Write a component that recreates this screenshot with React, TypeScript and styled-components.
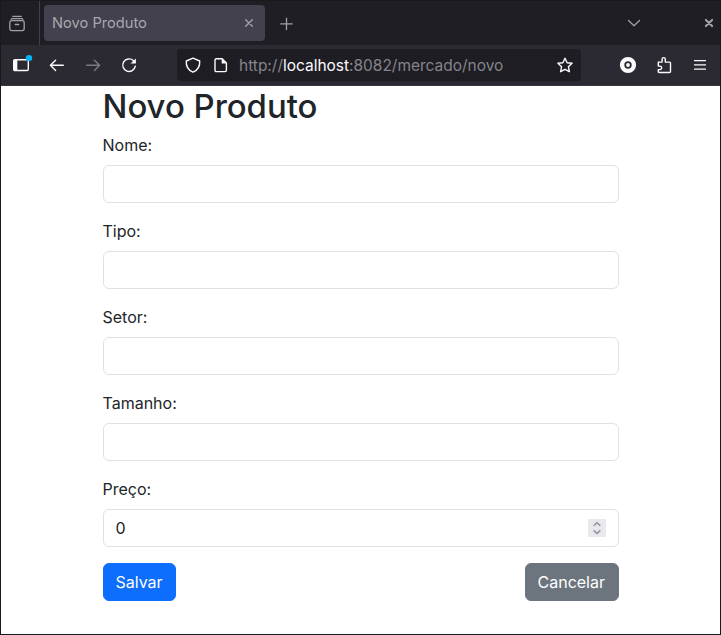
import React from "react";
import styled, { createGlobalStyle } from "styled-components";

const GlobalStyle = createGlobalStyle`
  *, *::before, *::after { box-sizing: border-box; }
  html, body { margin: 0; padding: 0; height: 100%; overflow: hidden; }
  body { font-family: Inter, "Liberation Sans", sans-serif; background: #fff; }
`;

const Window = styled.div`
  width: 721px;
  height: 635px;
  border: 1px solid #19191c;
  background: #fff;
  display: flex;
  flex-direction: column;
`;

const TabBar = styled.div`
  height: 44px;
  flex: none;
  display: flex;
  background: #1f1e25;
  color: #a2a1a7;
`;

const WorkspaceCell = styled.div`
  width: 39px;
  padding: 14px 0 0 8px;
  border-right: 1px solid #414047;
`;

const Tab = styled.div`
  width: 221px;
  height: 36px;
  margin: 4px 0 0 4px;
  padding: 0 10px 0 8px;
  border-radius: 4px;
  background: #42414d;
  display: flex;
  align-items: center;
  justify-content: space-between;
`;

const TabTitle = styled.span`
  font-size: 14.67px;
  line-height: 20px;
  color: #a8a8ad;
`;

const TabAction = styled.div<{ $left: number }>`
  display: flex;
  margin-left: ${(p) => p.$left}px;
  align-items: center;
`;

const Toolbar = styled.div`
  height: 41px;
  flex: none;
  display: flex;
  align-items: center;
  background: #2b2a33;
  border-bottom: 1px solid #38363f;
  color: #fbfbfe;
`;

const ToolIcon = styled.span<{ $left: number; $dim?: boolean }>`
  display: flex;
  margin-left: ${(p) => p.$left}px;
  color: ${(p) => (p.$dim ? "#7b7a82" : "#fbfbfe")};
`;

const AddressBar = styled.div`
  width: 404px;
  height: 32px;
  margin-left: 40px;
  padding: 0 8px;
  border-radius: 4px;
  background: #1e1d24;
  display: flex;
  align-items: center;
`;

const Address = styled.span`
  flex: 1;
  margin-left: 10px;
  padding-top: 2px;
  font-size: 15.47px;
  line-height: 22px;
  color: #85848a;
  white-space: pre;
`;

const Host = styled.span`
  color: #fbfbfe;
`;

const Page = styled.main`
  width: 516px;
  margin-left: 102px;
  color: #212529;
`;

const Title = styled.h1`
  margin: 0 0 7px -0.5px;
  padding-top: 1px;
  font-size: 32.9px;
  line-height: 39.4px;
  font-weight: 500;
`;

const Field = styled.div`
  margin-bottom: 16px;
`;

const Label = styled.label`
  display: block;
  margin: 0 0 8px -0.5px;
  font-size: 16px;
  line-height: 24px;
`;

const InputBox = styled.div`
  height: 38px;
  padding: 0 12px 0 11.5px;
  border: 1px solid #dee2e6;
  border-radius: 6px;
  display: flex;
  align-items: center;
`;

const Input = styled.input`
  flex: 1;
  min-width: 0;
  height: 24px;
  padding: 0;
  border: 0;
  outline: 0;
  background: transparent;
  color: #212529;
  font: 400 16px/24px Inter, "Liberation Sans", sans-serif;
`;

const Stepper = styled.span`
  width: 18px;
  height: 18px;
  background: #e9e9ed;
  display: flex;
`;

const Actions = styled.div`
  display: flex;
  justify-content: space-between;
`;

const Button = styled.button<{ $color: string; $width: number }>`
  width: ${(p) => p.$width}px;
  height: 38px;
  padding: 0 0 0 11.5px;
  text-align: left;
  border: 1px solid ${(p) => p.$color};
  border-radius: 6px;
  background: ${(p) => p.$color};
  color: #fff;
  font: 400 16px/24px Inter, "Liberation Sans", sans-serif;
`;

type IconProps = { w?: number; h?: number; sw?: number; children: React.ReactNode };

const Icon = ({ w = 16, h = 16, sw = 1.4, children }: IconProps) => (
  <svg
    width={w}
    height={h}
    viewBox={`0 0 ${w} ${h}`}
    fill="none"
    stroke="currentColor"
    strokeWidth={sw}
    strokeLinecap="round"
    strokeLinejoin="round"
    overflow="visible"
    display="block"
  >
    {children}
  </svg>
);

const fields = [
  { id: "nome", label: "Nome:" },
  { id: "tipo", label: "Tipo:" },
  { id: "setor", label: "Setor:" },
  { id: "tamanho", label: "Tamanho:" },
];

export default function App() {
  return (
    <>
      <GlobalStyle />
      <Window>
        <TabBar>
          <WorkspaceCell>
            <Icon sw={1.3}>
              <path d="M3.7 1.3h8.6M2.2 4.3Q2.4 3.6 3.4 3.6h9.2q1 0 1.2.7" />
              <rect x=".8" y="5.7" width="14.4" height="9.9" rx="2" />
              <path d="M6.3 9.5h3.4" />
            </Icon>
          </WorkspaceCell>
          <Tab>
            <TabTitle>Novo Produto</TabTitle>
            <Icon w={12} h={12} sw={1.4}>
              <path d="M2.7 2.7l6.6 6.6M9.3 2.7l-6.6 6.6" />
            </Icon>
          </Tab>
          <TabAction $left={15}>
            <Icon w={13} h={13} sw={1.3}>
              <path d="M6.5 1.2v11.4M.8 6.9h11.4" />
            </Icon>
          </TabAction>
          <TabAction $left={335}>
            <Icon w={12} h={12} sw={1.3}>
              <path d="M.5 3.5L6 8.8l5.5-5.3" />
            </Icon>
          </TabAction>
          <TabAction $left={64}>
            <Icon w={10} h={10} sw={2.1}>
              <path d="M1.9 1.9l6.2 6.2M8.1 1.9L1.9 8.1" />
            </Icon>
          </TabAction>
        </TabBar>

        <Toolbar>
          <ToolIcon $left={12}>
            <Icon>
              <rect x=".7" y="2.7" width="14.6" height="10.8" rx="1.2" />
              <path d="M.7 3v10.4h3.6V3z" fill="currentColor" stroke="none" />
              <circle cx="16" cy="1.1" r="3.2" fill="#00b3f4" stroke="none" />
            </Icon>
          </ToolIcon>
          <ToolIcon $left={20}>
            <Icon>
              <path d="M14.3 8.3H1.6M6.6 3.2L1.4 8.3l5.2 5.1" />
            </Icon>
          </ToolIcon>
          <ToolIcon $left={20} $dim>
            <Icon>
              <path d="M1.7 8.3h12.7M9.4 3.2l5.2 5.1-5.2 5.1" />
            </Icon>
          </ToolIcon>
          <ToolIcon $left={20}>
            <Icon>
              <path d="M12.3 3.5A6.3 6.3 0 1 0 14.3 9.2" />
              <path d="M14.9 1.4v5.2H9.6z" fill="currentColor" stroke="none" />
            </Icon>
          </ToolIcon>
          <AddressBar>
            <Icon>
              <path d="M8 1.2L14.7 4c.4 4.8-1.5 9-6.7 11.2C2.8 13 .9 8.8 1.3 4z" />
            </Icon>
            <ToolIcon $left={12}>
              <Icon>
                <path d="M3.4 1.7h5.8l4.2 4.3v7.2q0 1.4-1.4 1.4H3.4Q2 14.6 2 13.2V3.1q0-1.4 1.4-1.4z" />
                <path d="M8.7 1.6v4.9h5z" fill="currentColor" stroke="none" />
              </Icon>
            </ToolIcon>
            <Address>
              http://<Host>localhost</Host>:8082/mercado/novo
            </Address>
            <Icon>
              <path d="M8 1.2l2.1 4.5 5 .6-3.7 3.4 1 5L8 12.3l-4.4 2.4 1-5L.9 6.3l5-.6z" />
            </Icon>
          </AddressBar>
          <ToolIcon $left={39}>
            <Icon>
              <circle cx="8" cy="8" r="5.9" strokeWidth="4.4" />
              <circle cx="8" cy="8" r="1.9" fill="currentColor" stroke="none" />
            </Icon>
          </ToolIcon>
          <ToolIcon $left={20}>
            <Icon>
              <path d="M2.3 5.1h3.8V2.2a1.6 1.6 0 0 1 3.2 0v2.9h4.3q.9 0 .9.9v8.6q0 .9-.9.9H3.2q-.9 0-.9-.9v-2h1.6a1.75 1.75 0 0 0 0-3.5H2.3z" />
            </Icon>
          </ToolIcon>
          <ToolIcon $left={20}>
            <Icon sw={1.3}>
              <path d="M2.5 3.6h11M2.5 7.9h11M2.5 12.2h11" />
            </Icon>
          </ToolIcon>
        </Toolbar>

        <Page>
          <Title>Novo Produto</Title>
          <form>
            {fields.map((f) => (
              <Field key={f.id}>
                <Label htmlFor={f.id}>{f.label}</Label>
                <InputBox>
                  <Input id={f.id} type="text" />
                </InputBox>
              </Field>
            ))}
            <Field>
              <Label htmlFor="preco">Preço:</Label>
              <InputBox>
                <Input id="preco" type="text" inputMode="decimal" defaultValue="0" />
                <Stepper>
                  <svg width="18" height="18" fill="none" stroke="#8f8f9d" strokeWidth="1.5">
                    <path d="M5.7 6.8L9 3.7l3.3 3.1M5.7 11.4L9 14.5l3.3-3.1" />
                  </svg>
                </Stepper>
              </InputBox>
            </Field>
            <Actions>
              <Button type="button" $color="#0d6efd" $width={73}>Salvar</Button>
              <Button type="button" $color="#6c757d" $width={94}>Cancelar</Button>
            </Actions>
          </form>
        </Page>
      </Window>
    </>
  );
}
